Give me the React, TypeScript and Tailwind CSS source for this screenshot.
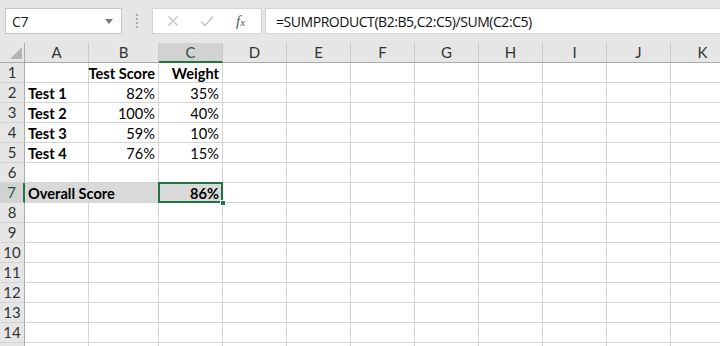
import React from 'react';

const COLS = [
  { key: 'A', w: 'w-[64px]' },
  { key: 'B', w: 'w-[70px]' },
  { key: 'C', w: 'w-[64px]' },
  { key: 'D', w: 'w-[64px]' },
  { key: 'E', w: 'w-[64px]' },
  { key: 'F', w: 'w-[64px]' },
  { key: 'G', w: 'w-[64px]' },
  { key: 'H', w: 'w-[64px]' },
  { key: 'I', w: 'w-[64px]' },
  { key: 'J', w: 'w-[64px]' },
  { key: 'K', w: 'w-[64px]' },
];

type Cell = { v: string; bold?: boolean; right?: boolean };

const DATA: Record<number, Record<string, Cell>> = {
  1: { B: { v: 'Test Score', bold: true, right: true }, C: { v: 'Weight', bold: true, right: true } },
  2: { A: { v: 'Test 1', bold: true }, B: { v: '82%', right: true }, C: { v: '35%', right: true } },
  3: { A: { v: 'Test 2', bold: true }, B: { v: '100%', right: true }, C: { v: '40%', right: true } },
  4: { A: { v: 'Test 3', bold: true }, B: { v: '59%', right: true }, C: { v: '10%', right: true } },
  5: { A: { v: 'Test 4', bold: true }, B: { v: '76%', right: true }, C: { v: '15%', right: true } },
  7: { A: { v: 'Overall Score', bold: true }, C: { v: '86%', bold: true, right: true } },
};

const ROWS = Array.from({ length: 15 }, (_, i) => i + 1);

function FormulaBar() {
  return (
    <div className="h-[43px] bg-[#e6e6e6] flex items-start pt-[8px] font-['Open_Sans',sans-serif] text-[#222]">
      <div className="ml-[5px] w-[117px] h-[26px] bg-white border border-[#c6c6c6] flex items-center justify-between pl-[6px] pr-[8px]">
        <span className="text-[14px] tracking-[-0.2px]">C7</span>
        <svg width="8" height="5" viewBox="0 0 8 5"><path d="M0 0h8L4 5z" fill="#777" /></svg>
      </div>
      <div className="w-[30px] h-[26px] flex flex-col items-center justify-center gap-[2px]">
        <span className="w-[2px] h-[2px] bg-[#aaa]" />
        <span className="w-[2px] h-[2px] bg-[#aaa]" />
        <span className="w-[2px] h-[2px] bg-[#aaa]" />
        <span className="w-[2px] h-[2px] bg-[#aaa]" />
      </div>
      <div className="w-[110px] h-[26px] bg-white border border-[#d4d4d4] flex items-center">
        <svg className="ml-[14px]" width="12" height="12" viewBox="0 0 12 12">
          <path d="M1.5 1.5l9 9M10.5 1.5l-9 9" stroke="#c3c3c3" strokeWidth="1.3" />
        </svg>
        <svg className="ml-[21px]" width="14" height="12" viewBox="0 0 14 12">
          <path d="M1 6.5l4 4L13 1.5" stroke="#c3c3c3" strokeWidth="1.4" fill="none" />
        </svg>
        <span className="ml-[22px] text-[15px] italic font-['Liberation_Serif',serif] text-[#555] leading-none">
          f<span className="text-[11px]">x</span>
        </span>
      </div>
      <div className="ml-[3px] flex-1 h-[26px] bg-white border border-[#d4d4d4] border-r-0 flex items-center pl-[10px]">
        <span className="text-[14px] tracking-[-0.45px] text-[#111]">=SUMPRODUCT(B2:B5,C2:C5)/SUM(C2:C5)</span>
      </div>
    </div>
  );
}

function HeaderRow() {
  return (
    <div className="flex h-[20px] bg-[#e6e6e6] border-b border-[#ababab]">
      <div className="w-[25px] shrink-0 border-r border-[#ababab] relative">
        <svg className="absolute right-[2px] bottom-[3px]" width="12" height="12" viewBox="0 0 12 12">
          <path d="M12 0v12H0z" fill="#b4b4b4" />
        </svg>
      </div>
      {COLS.map((c) => {
        const sel = c.key === 'C';
        return (
          <div
            key={c.key}
            className={`${c.w} shrink-0 flex items-center justify-center border-r border-[#c8c8c8] text-[15px] ${
              sel ? 'bg-[#d2d2d2] text-[#1e5a38] border-b-2 border-b-[#217346] -mb-px' : 'text-[#333]'
            }`}
          >
            {c.key}
          </div>
        );
      })}
    </div>
  );
}

function Row({ r }: { r: number }) {
  const sel = r === 7;
  const cells = DATA[r] ?? {};
  return (
    <div className="flex h-[20px]">
      <div
        className={`w-[25px] shrink-0 flex items-center justify-center text-[15px] border-b border-[#d4d4d4] ${
          sel ? 'bg-[#d2d2d2] border-r-2 border-r-[#217346] text-[#1e5a38]' : 'bg-[#e6e6e6] border-r border-r-[#ababab] text-[#333]'
        }`}
      >
        {r < 15 ? r : ''}
      </div>
      {COLS.map((c) => {
        const cell = cells[c.key];
        const filled = sel && (c.key === 'A' || c.key === 'B' || c.key === 'C');
        const active = sel && c.key === 'C';
        return (
          <div
            key={c.key}
            className={`${c.w} shrink-0 relative flex items-center px-[3px] pt-[2px] text-[14.6px] text-black whitespace-nowrap ${
              filled ? 'bg-[#d9d9d9]' : 'bg-white'
            } ${filled && c.key === 'A' ? 'z-10' : 'border-r border-[#d4d4d4]'} border-b border-[#d4d4d4] ${
              cell?.right ? 'justify-end' : 'justify-start'
            } ${cell?.bold ? 'font-bold' : ''}`}
          >
            {cell && <span className="relative z-10">{cell.v}</span>}
            {active && (
              <>
                <div className="absolute -left-px -top-px right-[-1px] bottom-[-1px] border-2 border-[#217346]" />
                <div className="absolute right-[-4px] bottom-[-4px] w-[6px] h-[6px] bg-[#217346] border border-white z-20" />
              </>
            )}
          </div>
        );
      })}
    </div>
  );
}

export default function App() {
  return (
    <div className="w-[720px] h-[346px] overflow-hidden bg-white font-['Lato',sans-serif]">
      <FormulaBar />
      <HeaderRow />
      {ROWS.map((r) => (
        <Row key={r} r={r} />
      ))}
    </div>
  );
}
